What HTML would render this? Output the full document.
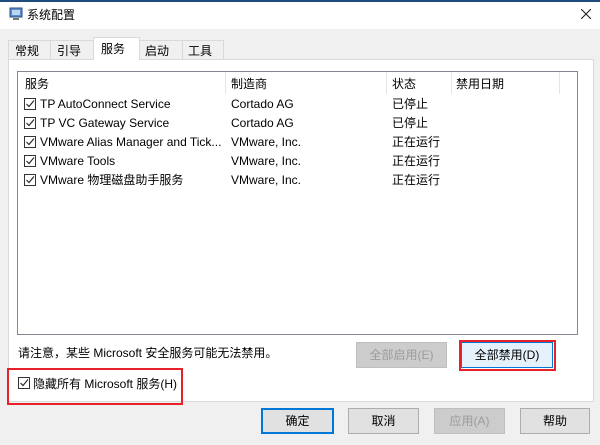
<!DOCTYPE html>
<html><head><meta charset="utf-8"><style>
*{margin:0;padding:0;box-sizing:border-box}
body{width:600px;height:445px;background:#f0f0f0;font-family:"Liberation Sans","Noto Sans CJK SC",sans-serif;font-size:12px;line-height:14px;color:#000;position:relative;overflow:hidden}
.a{position:absolute;white-space:nowrap}
.cb{position:absolute;width:12px;height:12px;border:1px solid #333;background:#fff}
.cb svg{position:absolute;left:0;top:0}
.btn{position:absolute;border:1px solid #adadad;background:#e1e1e1;text-align:center;font-size:12px}
</style></head><body>
<div class="a" style="left:0;top:0;width:600px;height:2px;background:#1e4a7e"></div>
<div class="a" style="left:0;top:2px;width:600px;height:27px;background:#fff"></div>
<svg class="a" style="left:9px;top:7px" width="14" height="14"><rect x="1" y="1" width="12" height="9" fill="#5a8ed0" stroke="#2b4f80"/><rect x="3" y="3" width="8" height="5" fill="#bcd6f2"/><rect x="4" y="11" width="6" height="2" fill="#777"/></svg>
<div class="a" style="left:27px;top:8px">系统配置</div>
<svg class="a" style="left:581px;top:9px" width="10" height="10"><path d="M0 0L10 10M10 0L0 10" stroke="#222" stroke-width="1.1"/></svg>
<div class="a" style="left:8px;top:40px;width:43px;height:20px;border:1px solid #d9d9d9;border-bottom:none;background:#f0f0f0;padding:3px 0 0 6px">常规</div>
<div class="a" style="left:50px;top:40px;width:44px;height:20px;border:1px solid #d9d9d9;border-bottom:none;background:#f0f0f0;padding:3px 0 0 6px">引导</div>
<div class="a" style="left:93px;top:37px;width:47px;height:23px;border:1px solid #d9d9d9;border-bottom:none;background:#fff;padding:4px 0 0 7px;z-index:2">服务</div>
<div class="a" style="left:139px;top:40px;width:44px;height:20px;border:1px solid #d9d9d9;border-bottom:none;background:#f0f0f0;padding:3px 0 0 5px">启动</div>
<div class="a" style="left:182px;top:40px;width:42px;height:20px;border:1px solid #d9d9d9;border-bottom:none;background:#f0f0f0;padding:3px 0 0 5px">工具</div>
<div class="a" style="left:8px;top:59px;width:586px;height:343px;border:1px solid #d9d9d9;background:#fff"></div>
<div class="a" style="left:17px;top:71px;width:561px;height:264px;border:1px solid #828790;background:#fff"></div>
<div class="a" style="left:225px;top:72px;width:1px;height:22px;background:#e5e5e5"></div>
<div class="a" style="left:386px;top:72px;width:1px;height:22px;background:#e5e5e5"></div>
<div class="a" style="left:451px;top:72px;width:1px;height:22px;background:#e5e5e5"></div>
<div class="a" style="left:559px;top:72px;width:1px;height:22px;background:#e5e5e5"></div>
<div class="a" style="left:25px;top:77px">服务</div>
<div class="a" style="left:231px;top:77px">制造商</div>
<div class="a" style="left:392px;top:77px">状态</div>
<div class="a" style="left:456px;top:77px">禁用日期</div>

<div class="cb" style="left:24px;top:98px"><svg width="10" height="10"><path d="M1.5 5L4 7.5L9 1.5" fill="none" stroke="#222" stroke-width="1.1"/></svg></div>
<div class="a" style="left:40px;top:97px">TP AutoConnect Service</div><div class="a" style="left:231px;top:97px">Cortado AG</div><div class="a" style="left:392px;top:97px">已停止</div>
<div class="cb" style="left:24px;top:117px"><svg width="10" height="10"><path d="M1.5 5L4 7.5L9 1.5" fill="none" stroke="#222" stroke-width="1.1"/></svg></div>
<div class="a" style="left:40px;top:116px">TP VC Gateway Service</div><div class="a" style="left:231px;top:116px">Cortado AG</div><div class="a" style="left:392px;top:116px">已停止</div>
<div class="cb" style="left:24px;top:136px"><svg width="10" height="10"><path d="M1.5 5L4 7.5L9 1.5" fill="none" stroke="#222" stroke-width="1.1"/></svg></div>
<div class="a" style="left:40px;top:135px">VMware Alias Manager and Tick...</div><div class="a" style="left:231px;top:135px">VMware, Inc.</div><div class="a" style="left:392px;top:135px">正在运行</div>
<div class="cb" style="left:24px;top:155px"><svg width="10" height="10"><path d="M1.5 5L4 7.5L9 1.5" fill="none" stroke="#222" stroke-width="1.1"/></svg></div>
<div class="a" style="left:40px;top:154px">VMware Tools</div><div class="a" style="left:231px;top:154px">VMware, Inc.</div><div class="a" style="left:392px;top:154px">正在运行</div>
<div class="cb" style="left:24px;top:174px"><svg width="10" height="10"><path d="M1.5 5L4 7.5L9 1.5" fill="none" stroke="#222" stroke-width="1.1"/></svg></div>
<div class="a" style="left:40px;top:173px">VMware 物理磁盘助手服务</div><div class="a" style="left:231px;top:173px">VMware, Inc.</div><div class="a" style="left:392px;top:173px">正在运行</div>

<div class="a" style="left:18px;top:346px">请注意，某些 Microsoft 安全服务可能无法禁用。</div>
<div class="btn" style="left:356px;top:342px;width:91px;height:26px;line-height:24px;color:#9c9c9c;background:#cccccc;border-color:#bfbfbf">全部启用(E)</div>
<div class="btn" style="left:461px;top:342px;width:92px;height:26px;line-height:24px;background:#e5f1fb;border-color:#0078d7">全部禁用(D)</div>
<div class="a" style="left:459px;top:340px;width:97px;height:31px;border:2px solid #e8202a"></div>

<div class="cb" style="left:18px;top:377px"><svg width="10" height="10"><path d="M1.5 5L4 7.5L9 1.5" fill="none" stroke="#222" stroke-width="1.1"/></svg></div>
<div class="a" style="left:33px;top:377px">隐藏所有 Microsoft 服务(H)</div>
<div class="a" style="left:7px;top:368px;width:176px;height:37px;border:2px solid #e8202a"></div>

<div class="btn" style="left:261px;top:408px;width:73px;height:26px;line-height:22px;border:2px solid #0078d7">确定</div>
<div class="btn" style="left:348px;top:408px;width:71px;height:26px;line-height:24px">取消</div>
<div class="btn" style="left:434px;top:408px;width:71px;height:26px;line-height:24px;color:#9c9c9c;background:#cccccc;border-color:#bfbfbf">应用(A)</div>
<div class="btn" style="left:520px;top:408px;width:70px;height:26px;line-height:24px">帮助</div>
</body></html>
